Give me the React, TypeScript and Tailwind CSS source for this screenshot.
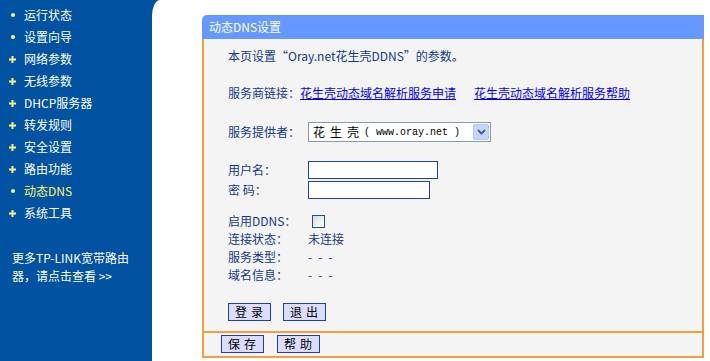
import React from 'react';

const menu = [
  { label: '运行状态', mark: 'dot' },
  { label: '设置向导', mark: 'dot' },
  { label: '网络参数', mark: 'plus' },
  { label: '无线参数', mark: 'plus' },
  { label: 'DHCP服务器', mark: 'plus' },
  { label: '转发规则', mark: 'plus' },
  { label: '安全设置', mark: 'plus' },
  { label: '路由功能', mark: 'plus' },
  { label: '动态DNS', mark: 'dot', active: true },
  { label: '系统工具', mark: 'plus' },
];

const font = { fontFamily: '"Noto Sans CJK SC", "Noto Sans", sans-serif' };
const mono = { fontFamily: '"Liberation Mono", "Noto Sans CJK SC", monospace' };

function Mark({ kind }: { kind: string }) {
  if (kind === 'dot') {
    return <span className="block w-[4px] h-[4px] rounded-full bg-[#fff67a]" />;
  }
  return (
    <svg width="7" height="7" viewBox="0 0 7 7">
      <rect x="2.5" y="0" width="2" height="7" fill="#fff67a" />
      <rect x="0" y="2.5" width="7" height="2" fill="#fff67a" />
    </svg>
  );
}

function Btn({ children }: { children: React.ReactNode }) {
  return (
    <button className="w-[43px] h-[18px] bg-[#dcdcff] border-[1.5px] border-[#1e40a8] text-black text-[12px] leading-[14px] tracking-[4px] pl-[3px]">
      {children}
    </button>
  );
}

function Row({ label, children, className = '' }: { label: string; children?: React.ReactNode; className?: string }) {
  return (
    <div className={'flex items-center h-[18px] ' + className}>
      <div className="w-[80px] shrink-0">{label}</div>
      {children}
    </div>
  );
}

export default function App() {
  return (
    <div className="flex w-[710px] h-[361px] bg-[#0152a1] overflow-hidden text-[12px]" style={font}>
      <aside className="w-[152px] shrink-0 flex flex-col pt-[4px]">
        {menu.map((m) => (
          <div key={m.label} className="flex items-center h-[22px]">
            <div className="w-[24px] flex justify-center pl-[7px] pr-[6px] items-center">
              <Mark kind={m.mark} />
            </div>
            <span className={m.active ? 'text-[#fff670]' : 'text-white'}>{m.label}</span>
          </div>
        ))}
        <div className="mt-[25px] pl-[12px] text-white leading-[18px]">
          更多TP-LINK宽带路由
          <br />
          器，请点击查看 &gt;&gt;
        </div>
      </aside>

      <main className="flex-1 bg-white rounded-tl-[8px_16px] pt-[15px] pl-[50px]">
        <div className="w-[502px]">
          <div className="h-[24px] bg-[#6699ff] rounded-tl-[5px] text-white flex items-center pl-[7px]">动态DNS设置</div>
          <div className="bg-[#f4f4f4] border-x-2 border-b-2 border-[#f99d3a] text-[#13398c]">
            <div className="pl-[24px] pt-[8px] pb-[10px]">
              <div className="h-[18px] flex items-center">本页设置“Oray.net花生壳DDNS”的参数。</div>
              <div className="h-[18px] flex items-center mt-[19px]">
                <span className="w-[72px]">服务商链接：</span>
                <a className="text-[#0000ff] underline">花生壳动态域名解析服务申请</a>
                <a className="text-[#0000ff] underline ml-[18px]">花生壳动态域名解析服务帮助</a>
              </div>
              <div className="flex items-center h-[20px] mt-[20px]">
                <div className="w-[80px] shrink-0">服务提供者：</div>
                <div className="w-[183px] h-[20px] bg-white border border-[#7f9db9] flex items-center justify-between pl-[4px] pr-[1px] text-black">
                  <span className="flex items-center whitespace-nowrap">
                    <span className="tracking-[5px]">花生壳</span>
                    <span className="text-[10px] whitespace-pre" style={mono}>( www.oray.net )</span>
                  </span>
                  <span className="w-[16px] h-[16px] bg-[#c3d5fd] border border-[#b4c8f4] rounded-[2px] flex items-center justify-center">
                    <svg width="9" height="6" viewBox="0 0 9 6">
                      <path d="M1 1 L4.5 4.5 L8 1" stroke="#4d6185" strokeWidth="2" fill="none" />
                    </svg>
                  </span>
                </div>
              </div>
              <Row label="用户名：" className="mt-[19px]">
                <div className="w-[130px] h-[18px] bg-white border-[1.5px] border-[#1e40a8]" />
              </Row>
              <Row label="密 码：" className="mt-[2px]">
                <div className="w-[122px] h-[18px] bg-white border-[1.5px] border-[#1e40a8]" />
              </Row>
              <Row label="启用DDNS：" className="mt-[13px]">
                <div className="ml-[4px] w-[13px] h-[13px] border border-[#1c5180] bg-gradient-to-br from-[#dcdcd6] to-white" />
              </Row>
              <Row label="连接状态：">未连接</Row>
              <Row label="服务类型："><span className="tracking-[6px]">---</span></Row>
              <Row label="域名信息："><span className="tracking-[6px]">---</span></Row>
              <div className="flex gap-[12px] mt-[19px]">
                <Btn>登录</Btn>
                <Btn>退出</Btn>
              </div>
            </div>
            <div className="border-t-2 border-[#f99d3a] flex gap-[13px] pl-[17px] pt-[2px] pb-[3px]">
              <Btn>保存</Btn>
              <Btn>帮助</Btn>
            </div>
          </div>
        </div>
      </main>
    </div>
  );
}
